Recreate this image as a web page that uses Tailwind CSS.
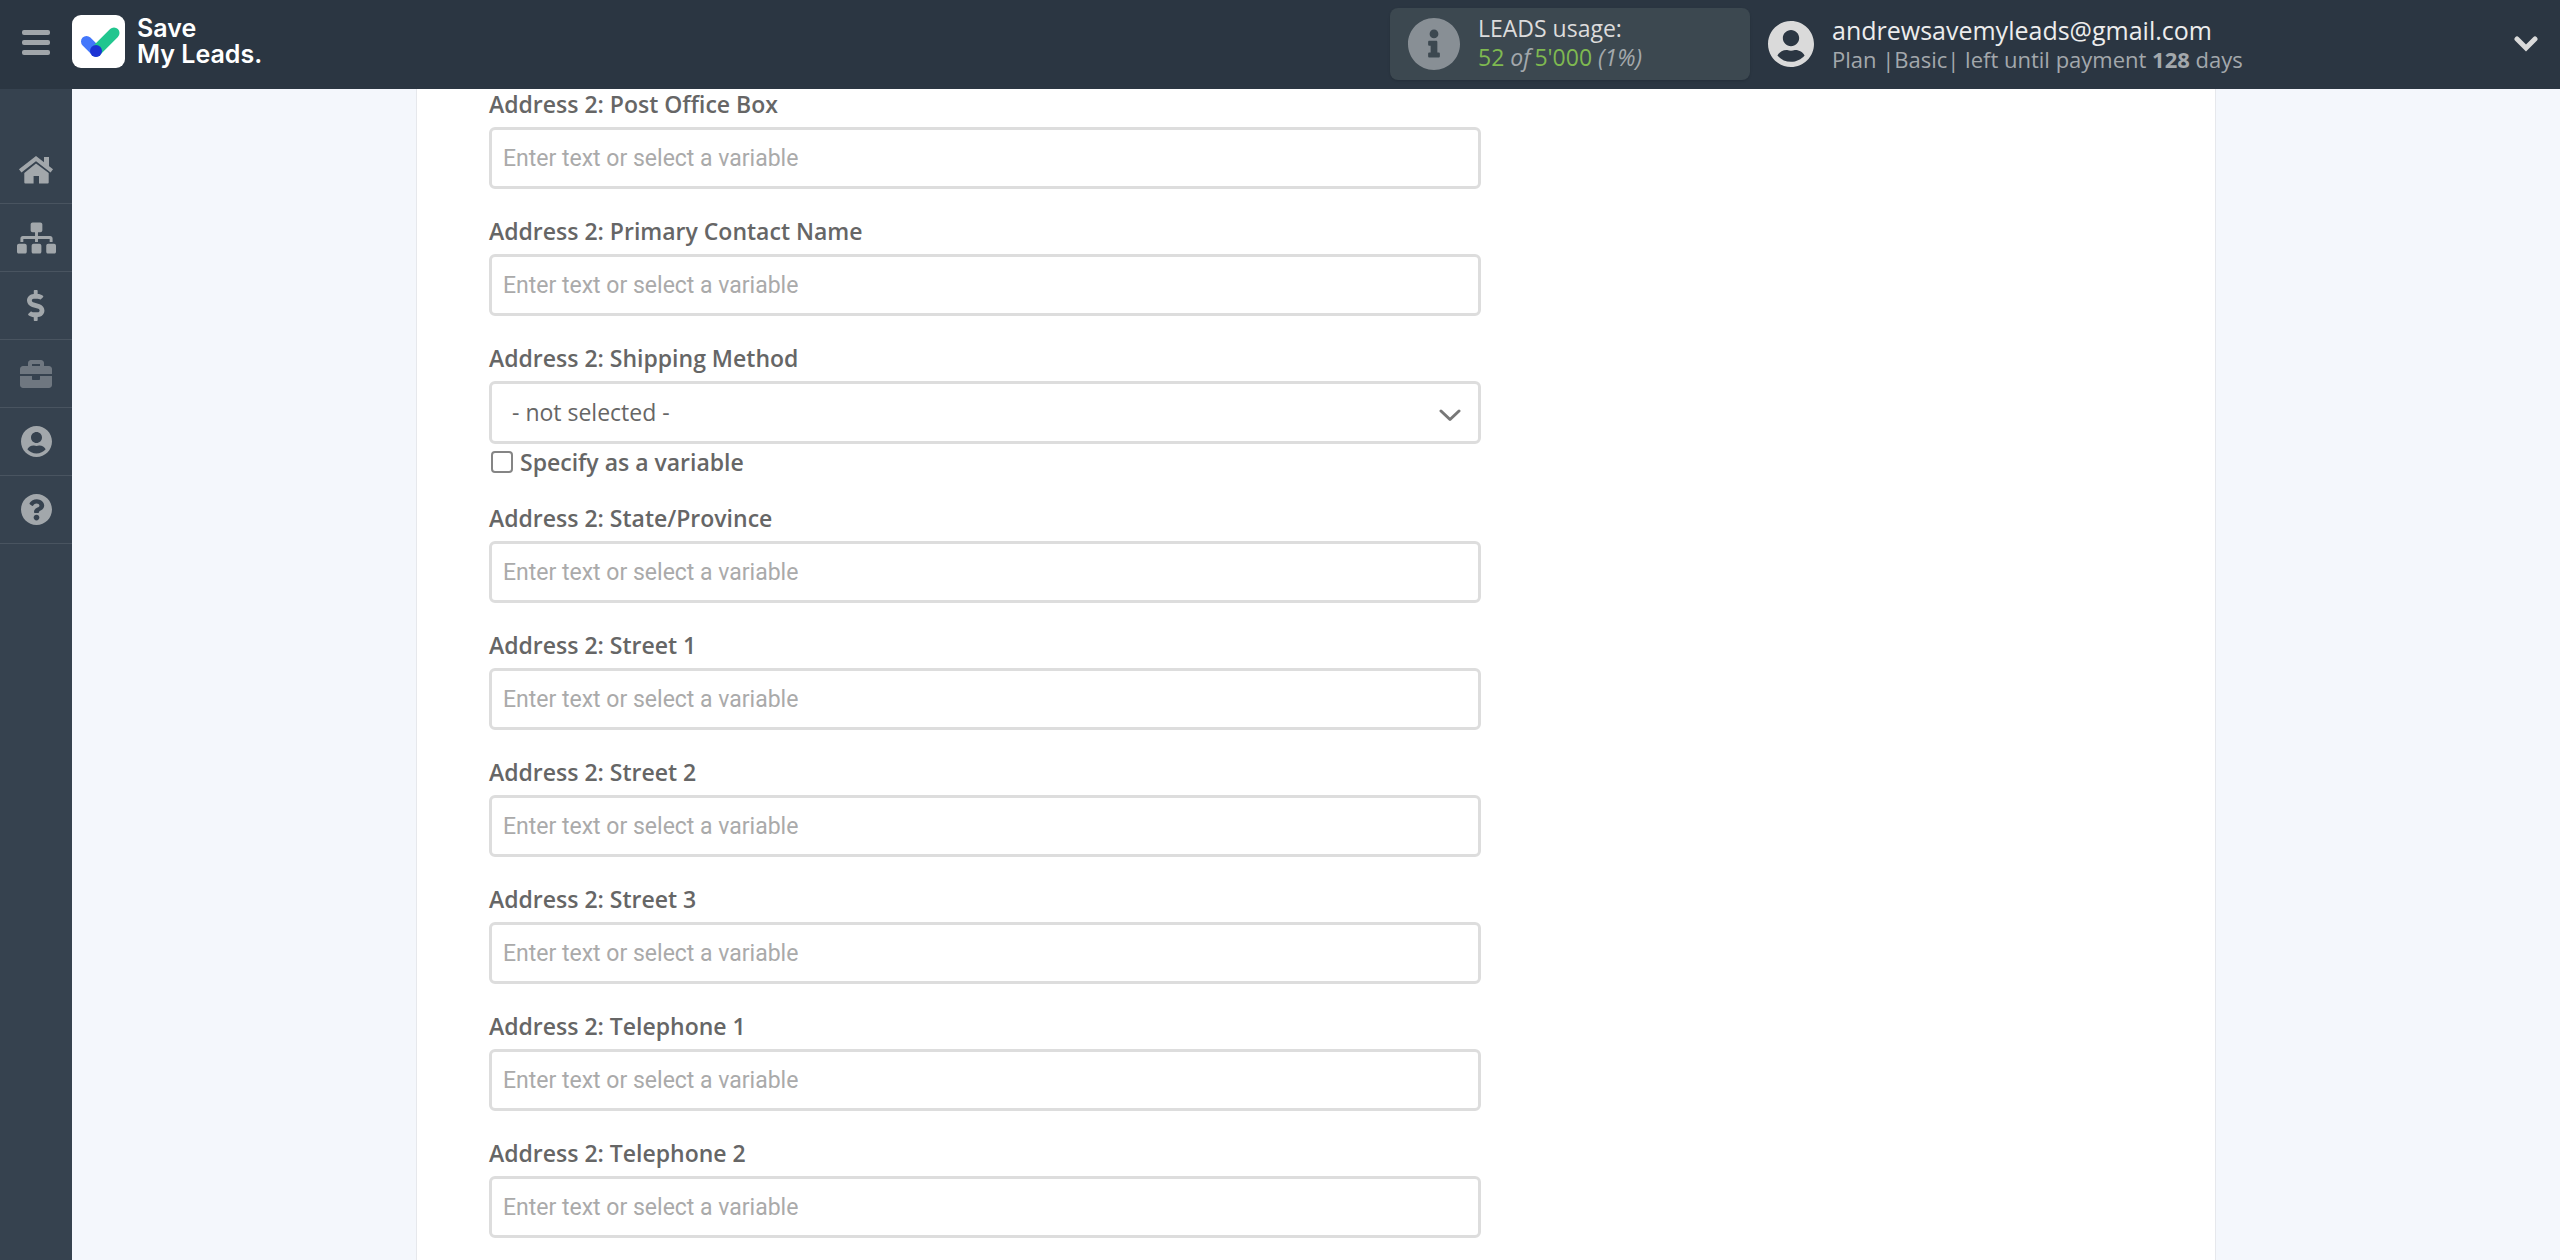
<!DOCTYPE html>
<html lang="en">
<head>
  <meta charset="UTF-8" />
  <title>Save My Leads</title>
  <meta name="viewport" content="width=device-width, initial-scale=1" />
  <script src="https://cdn.jsdelivr.net/npm/@tailwindcss/browser@4"></script>
</head>
<body class="min-h-screen flex flex-col bg-[#f4f7fc] font-['Open_Sans',sans-serif] text-[23px] text-[#666]">
  <!-- Header -->
  <header class="flex items-center h-[89px] shrink-0 px-[22px] pb-[2px] bg-[#2b3642]">
    <button type="button" aria-label="Menu" class="flex flex-col gap-[5px] w-7 mr-[22px] pb-[2px]">
      <span class="block h-[5px] w-full rounded-xs bg-[#a1a6aa]"></span>
      <span class="block h-[5px] w-full rounded-xs bg-[#a1a6aa]"></span>
      <span class="block h-[5px] w-full rounded-xs bg-[#a1a6aa]"></span>
    </button>
    <a href="#" class="flex items-center gap-3 pb-[5px]">
      <svg class="size-[53px]" viewBox="0 0 53 53" fill="none" stroke-linecap="round" stroke-width="11">
        <rect width="53" height="53" rx="9" fill="#fff"/>
        <path d="M14.5 26.5L24 36" stroke="#4377fb"/>
        <path d="M24 36L42 18" stroke="#22c68f"/>
        <circle cx="24" cy="36" r="6" fill="#1c33d4"/>
      </svg>
      <span class="font-['Inter',sans-serif] text-[25px] font-semibold leading-[26px] text-white">Save<br>My Leads.</span>
    </a>

    <div class="flex items-center gap-[18px] w-[360px] h-[72px] ml-auto mr-[18px] pl-[18px] rounded-lg bg-[#3c4850] shadow-sm">
      <svg class="size-[52px] fill-[#888f95]" viewBox="8 8 496 496"><path d="M256 8C119.043 8 8 119.083 8 256c0 136.997 111.043 248 248 248s248-111.003 248-248C504 119.083 392.957 8 256 8zm0 110c23.196 0 42 18.804 42 42s-18.804 42-42 42-42-18.804-42-42 18.804-42 42-42zm56 254c0 6.627-5.373 12-12 12h-88c-6.627 0-12-5.373-12-12v-24c0-6.627 5.373-12 12-12h12v-64h-12c-6.627 0-12-5.373-12-12v-24c0-6.627 5.373-12 12-12h64c6.627 0 12 5.373 12 12v100h12c6.627 0 12 5.373 12 12v24z"/></svg>
      <div class="pb-1">
        <p class="leading-[30px] text-[#dcdcdc]">LEADS usage:</p>
        <p class="leading-7 text-[#a3a8ac]"><span class="text-[#7fb950]">52</span> <i>of</i><span class="ml-1 text-[#7fb950]">5'000</span> <i>(1%)</i></p>
      </div>
    </div>

    <button type="button" class="flex items-center w-[770px] text-left">
      <svg class="size-[46px] mr-[18px] fill-[#dadada]" viewBox="0 8 496 496"><path d="M248 8C111 8 0 119 0 256s111 248 248 248 248-111 248-248S385 8 248 8zm0 96c48.6 0 88 39.4 88 88s-39.4 88-88 88-88-39.4-88-88 39.4-88 88-88zm0 344c-58.7 0-111.3-26.6-146.5-68.2 18.8-35.4 55.6-59.8 98.5-59.8 2.4 0 4.8.4 7.1 1.1 13 4.2 26.6 6.9 40.9 6.9 14.3 0 28-2.7 40.9-6.9 2.3-.7 4.7-1.1 7.1-1.1 42.9 0 79.7 24.4 98.5 59.8C359.3 421.4 306.7 448 248 448z"/></svg>
      <span class="block">
        <span class="block text-[25px] leading-[30px] text-[#ededed]">andrewsavemyleads@gmail.com</span>
        <span class="block text-[22px] leading-7 text-[#a3a8ac]">Plan |Basic| left until payment <b>128</b> days</span>
      </span>
      <svg class="w-6 h-4 ml-auto" viewBox="0 0 24 16" fill="none" stroke="#dadada" stroke-width="5" stroke-linecap="round"><path d="M3 3L12 12L21 3"/></svg>
    </button>
  </header>

  <div class="flex flex-1">
    <!-- Sidebar -->
    <nav class="w-[72px] shrink-0 pt-[47px] bg-[#36424f] fill-[#a2a7ab]">
      <a href="#" aria-label="Home" class="flex items-center justify-center h-[68px] border-b border-[#495460]">
        <svg class="w-9 h-7" viewBox="0 0 36 28"><path d="M26 1h5v11l-5-4z"/><path d="M2.2 14.8L18 2.6L33.8 14.8" fill="none" stroke="#a2a7ab" stroke-width="4"/><path d="M18 7.5L30.7 17V26.5q0 1-1 1H21V20h-5.400v7.500H7.300q-1 0-1-1V17z"/></svg>
      </a>
      <a href="#" aria-label="Connections" class="flex items-center justify-center h-[68px] border-b border-[#495460]">
        <svg class="w-[39px] h-8" viewBox="0 0 640 512"><path d="M128 352H32c-17.67 0-32 14.33-32 32v96c0 17.67 14.33 32 32 32h96c17.67 0 32-14.33 32-32v-96c0-17.67-14.33-32-32-32zm-24-80h192v48h48v-48h192v48h48v-57.59c0-21.17-17.23-38.41-38.41-38.41H344v-64h40c17.67 0 32-14.33 32-32V32c0-17.67-14.33-32-32-32H256c-17.67 0-32 14.33-32 32v96c0 17.67 14.33 32 32 32h40v64H94.41C73.23 224 56 241.23 56 262.41V320h48v-48zm264 80h-96c-17.67 0-32 14.33-32 32v96c0 17.67 14.33 32 32 32h96c17.67 0 32-14.33 32-32v-96c0-17.67-14.33-32-32-32zm240 0h-96c-17.67 0-32 14.33-32 32v96c0 17.67 14.33 32 32 32h96c17.67 0 32-14.33 32-32v-96c0-17.67-14.33-32-32-32z"/></svg>
      </a>
      <a href="#" aria-label="Billing" class="flex items-center justify-center h-[68px] border-b border-[#495460]">
        <svg class="h-[31px]" viewBox="0 0 288 512"><path d="M209.2 233.4l-108-31.6C88.7 198.2 80 186.5 80 173.5c0-16.3 13.2-29.5 29.5-29.5h66.3c12.2 0 24.2 3.7 34.2 10.5 6.1 4.1 14.3 3.1 19.5-2l34.8-34c7.1-6.9 6.1-18.4-1.8-24.500C238 74.800 207.400 64.100 176 64V16c0-8.800-7.200-16-16-16h-32c-8.800 0-16 7.200-16 16v48h-2.500C45.800 64-5.400 118.700.5 183.600c4.200 46.100 39.400 83.600 83.800 96.600l102.500 30c12.500 3.700 21.200 15.300 21.200 28.300 0 16.300-13.200 29.500-29.500 29.500h-66.300C100 368 88 364.300 78 357.500c-6.100-4.100-14.300-3.100-19.500 2l-34.800 34c-7.100 6.900-6.100 18.400 1.800 24.500 24.500 19.200 55.100 29.900 86.500 30v48c0 8.800 7.200 16 16 16h32c8.800 0 16-7.200 16-16v-48.200c46.600-.9 90.300-28.600 105.700-72.700 21.500-61.600-14.600-124.800-72.500-141.700z"/></svg>
      </a>
      <a href="#" aria-label="Projects" class="flex items-center justify-center h-[68px] border-b border-[#495460]">
        <svg class="size-8 fill-[#6f7780]" viewBox="0 0 512 512"><path d="M320 336c0 8.84-7.16 16-16 16h-96c-8.84 0-16-7.16-16-16v-48H0v144c0 25.6 22.4 48 48 48h416c25.6 0 48-22.4 48-48V288H320v48zm144-208h-80V80c0-25.6-22.4-48-48-48H176c-25.6 0-48 22.4-48 48v48H48c-25.6 0-48 22.4-48 48v80h512v-80c0-25.6-22.4-48-48-48zm-144 0H192V96h128v32z"/></svg>
      </a>
      <a href="#" aria-label="Account" class="flex items-center justify-center h-[68px] border-b border-[#495460]">
        <svg class="size-[31px]" viewBox="0 8 496 496"><path d="M248 8C111 8 0 119 0 256s111 248 248 248 248-111 248-248S385 8 248 8zm0 96c48.6 0 88 39.4 88 88s-39.4 88-88 88-88-39.4-88-88 39.4-88 88-88zm0 344c-58.7 0-111.3-26.6-146.5-68.2 18.8-35.4 55.6-59.8 98.5-59.8 2.4 0 4.8.4 7.1 1.1 13 4.2 26.6 6.9 40.9 6.9 14.3 0 28-2.7 40.9-6.9 2.3-.7 4.7-1.1 7.1-1.1 42.9 0 79.7 24.4 98.5 59.8C359.3 421.4 306.7 448 248 448z"/></svg>
      </a>
      <a href="#" aria-label="Help" class="flex items-center justify-center h-[68px] border-b border-[#495460]">
        <svg class="size-[31px]" viewBox="8 8 496 496"><path d="M504 256c0 136.997-111.043 248-248 248S8 392.997 8 256C8 119.083 119.043 8 256 8s248 111.083 248 248zM262.655 90c-54.497 0-89.255 22.957-116.549 63.758-3.536 5.286-2.353 12.415 2.715 16.258l34.699 26.31c5.205 3.947 12.621 3.008 16.665-2.122 17.864-22.658 30.113-35.797 57.303-35.797 20.429 0 45.698 13.148 45.698 32.958 0 14.976-12.363 22.667-32.534 33.976C247.128 238.528 216 254.941 216 296v4c0 6.627 5.373 12 12 12h56c6.627 0 12-5.373 12-12v-1.333c0-28.462 83.186-29.647 83.186-106.667 0-58.002-60.165-102-116.531-102zM256 338c-25.365 0-46 20.635-46 46 0 25.364 20.635 46 46 46s46-20.636 46-46c0-25.365-20.635-46-46-46z"/></svg>
      </a>
    </nav>

    <!-- Form -->
    <main class="flex flex-1">
      <form class="w-full max-w-[1800px] mx-auto px-[72px] bg-white border-x border-[#e6e8ec]">
        <div class="flex flex-col gap-[27px] w-3/5">
          <div>
            <label for="post-office-box" class="block mb-2 leading-[30px] font-semibold">Address 2: Post Office Box</label>
            <input type="text" id="post-office-box" placeholder="Enter text or select a variable" class="block w-full h-[62px] px-[11px] border-3 border-[#ddd] rounded-md bg-white font-['Roboto',sans-serif] placeholder:text-[#aaa]">
          </div>
          <div>
            <label for="contact-name" class="block mb-2 leading-[30px] font-semibold">Address 2: Primary Contact Name</label>
            <input type="text" id="contact-name" placeholder="Enter text or select a variable" class="block w-full h-[62px] px-[11px] border-3 border-[#ddd] rounded-md bg-white font-['Roboto',sans-serif] placeholder:text-[#aaa]">
          </div>
          <div>
            <label for="shipping-method" class="block mb-2 leading-[30px] font-semibold">Address 2: Shipping Method</label>
            <div class="relative">
              <select id="shipping-method" class="block w-full h-[63px] px-5 appearance-none border-3 border-[#ddd] rounded-md bg-white">
                <option>- not selected -</option>
              </select>
              <svg class="absolute right-5 top-7 w-[22px] h-[14px] pointer-events-none" viewBox="0 0 22 14" fill="none" stroke="#777" stroke-width="3" stroke-linecap="round" stroke-linejoin="round"><path d="M2 2L11 10.500L20 2"/></svg>
            </div>
            <label class="flex items-center gap-[7px] h-7 mt-1 pl-[2px] font-semibold">
              <input type="checkbox" class="size-[22px] appearance-none border-2 border-[#858585] rounded-sm bg-white checked:bg-[#4377fb]">
              Specify as a variable
            </label>
          </div>
          <div>
            <label for="state" class="block mb-2 leading-[30px] font-semibold">Address 2: State/Province</label>
            <input type="text" id="state" placeholder="Enter text or select a variable" class="block w-full h-[62px] px-[11px] border-3 border-[#ddd] rounded-md bg-white font-['Roboto',sans-serif] placeholder:text-[#aaa]">
          </div>
          <div>
            <label for="street-1" class="block mb-2 leading-[30px] font-semibold">Address 2: Street 1</label>
            <input type="text" id="street-1" placeholder="Enter text or select a variable" class="block w-full h-[62px] px-[11px] border-3 border-[#ddd] rounded-md bg-white font-['Roboto',sans-serif] placeholder:text-[#aaa]">
          </div>
          <div>
            <label for="street-2" class="block mb-2 leading-[30px] font-semibold">Address 2: Street 2</label>
            <input type="text" id="street-2" placeholder="Enter text or select a variable" class="block w-full h-[62px] px-[11px] border-3 border-[#ddd] rounded-md bg-white font-['Roboto',sans-serif] placeholder:text-[#aaa]">
          </div>
          <div>
            <label for="street-3" class="block mb-2 leading-[30px] font-semibold">Address 2: Street 3</label>
            <input type="text" id="street-3" placeholder="Enter text or select a variable" class="block w-full h-[62px] px-[11px] border-3 border-[#ddd] rounded-md bg-white font-['Roboto',sans-serif] placeholder:text-[#aaa]">
          </div>
          <div>
            <label for="telephone-1" class="block mb-2 leading-[30px] font-semibold">Address 2: Telephone 1</label>
            <input type="text" id="telephone-1" placeholder="Enter text or select a variable" class="block w-full h-[62px] px-[11px] border-3 border-[#ddd] rounded-md bg-white font-['Roboto',sans-serif] placeholder:text-[#aaa]">
          </div>
          <div>
            <label for="telephone-2" class="block mb-2 leading-[30px] font-semibold">Address 2: Telephone 2</label>
            <input type="text" id="telephone-2" placeholder="Enter text or select a variable" class="block w-full h-[62px] px-[11px] border-3 border-[#ddd] rounded-md bg-white font-['Roboto',sans-serif] placeholder:text-[#aaa]">
          </div>
        </div>
      </form>
    </main>
  </div>
</body>
</html>
